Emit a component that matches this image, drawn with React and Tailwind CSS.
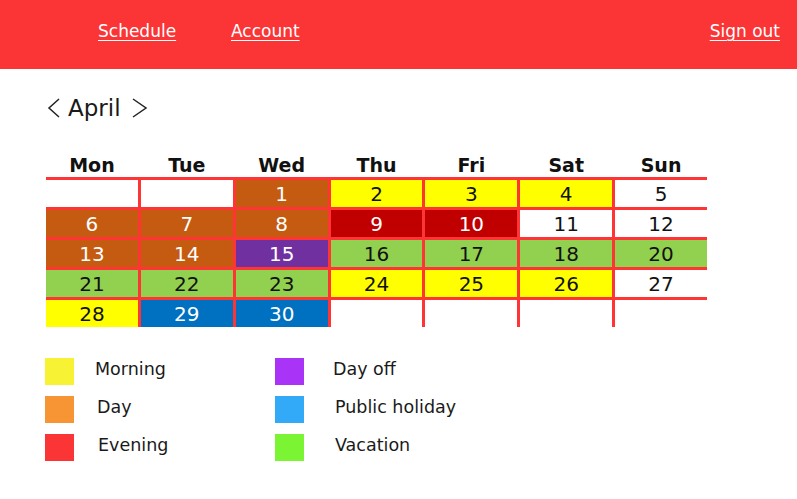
import React from "react";

const F = { fontFamily: '"DejaVu Sans", "Liberation Sans", sans-serif' };

const C = {
  o: "bg-[#c55a11] text-white",
  y: "bg-[#ffff00] text-[#111]",
  r: "bg-[#c00000] text-white",
  p: "bg-[#7030a0] text-white",
  g: "bg-[#92d050] text-[#111]",
  b: "bg-[#0070c0] text-white",
  w: "bg-white text-[#111]",
};

const cells = [
  ["", "w"], ["", "w"], ["1", "o"], ["2", "y"], ["3", "y"], ["4", "y"], ["5", "w"],
  ["6", "o"], ["7", "o"], ["8", "o"], ["9", "r"], ["10", "r"], ["11", "w"], ["12", "w"],
  ["13", "o"], ["14", "o"], ["15", "p"], ["16", "g"], ["17", "g"], ["18", "g"], ["20", "g"],
  ["21", "g"], ["22", "g"], ["23", "g"], ["24", "y"], ["25", "y"], ["26", "y"], ["27", "w"],
  ["28", "y"], ["29", "b"], ["30", "b"], ["", "w"], ["", "w"], ["", "w"], ["", "w"],
];

const days = ["Mon", "Tue", "Wed", "Thu", "Fri", "Sat", "Sun"];

function Legend({ color, label, ml }) {
  return (
    <div className="flex items-center h-[27px]">
      <div className={`w-[29px] h-[27px] ${color}`} />
      <span className={`text-[17.5px] text-[#1a1a1a] leading-none -mt-[3px] ${ml}`}>{label}</span>
    </div>
  );
}

export default function App() {
  return (
    <div style={F} className="w-[797px] h-[499px] bg-white overflow-hidden">
      <header className="h-[69px] bg-[#fb3436] flex items-center text-white text-[17px] pl-[98px] pr-[17px]">
        <div className="w-[133px] -mt-[6px]">
          <a className="underline underline-offset-[3px] decoration-1">Schedule</a>
        </div>
        <a className="underline underline-offset-[3px] decoration-1 -mt-[6px]">Account</a>
        <a className="ml-auto underline underline-offset-[3px] decoration-1 -mt-[6px]">Sign out</a>
      </header>

      <main className="pl-[46px] pt-[26px]">
        <div className="flex items-center h-[26px] text-[#1a1a1a]">
          <svg width="14" height="22" viewBox="0 0 14 22" className="ml-[1px]">
            <polyline points="12,2 2,11 12,20" fill="none" stroke="#222" strokeWidth="1.5" />
          </svg>
          <span className="text-[23px] ml-[7px] leading-none">April</span>
          <svg width="18" height="22" viewBox="0 0 18 22" className="ml-[10px]">
            <polyline points="2,2 15,11 2,20" fill="none" stroke="#222" strokeWidth="1.5" />
          </svg>
        </div>

        <div className="w-[661px] mt-[32px] grid grid-cols-7 gap-x-[3px] h-[24px] items-center">
          {days.map((d) => (
            <div key={d} className="text-center font-bold text-[19px] text-[#111] leading-none">
              {d}
            </div>
          ))}
        </div>

        <div className="w-[661px] grid grid-cols-7 gap-[3px] pt-[3px] bg-[#ff3535]">
          {cells.map(([n, c], i) => (
            <div
              key={i}
              className={`h-[27px] flex items-center justify-center text-[20px] leading-none ${C[c]}`}
            >
              {n}
            </div>
          ))}
        </div>
      </main>

      <section className="pl-[45px] mt-[31px] grid grid-cols-[230px_auto] gap-y-[11px] w-[600px]">
        <Legend color="bg-[#f7f234]" label="Morning" ml="ml-[21px]" />
        <Legend color="bg-[#a933f6]" label="Day off" ml="ml-[29px]" />
        <Legend color="bg-[#f79433]" label="Day" ml="ml-[23px]" />
        <Legend color="bg-[#33aaf7]" label="Public holiday" ml="ml-[31px]" />
        <Legend color="bg-[#fb3436]" label="Evening" ml="ml-[24px]" />
        <Legend color="bg-[#7bf533]" label="Vacation" ml="ml-[31px]" />
      </section>
    </div>
  );
}
